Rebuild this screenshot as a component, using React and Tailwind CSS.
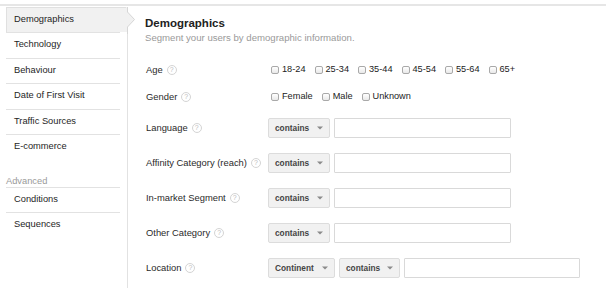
import React from "react";

function Help() {
  return (
    <span className="ml-[4px] inline-flex h-[10px] w-[10px] items-center justify-center rounded-full border border-[#d4d4d4] text-[7px] leading-none text-[#bdbdbd]">
      ?
    </span>
  );
}

function Check({ label }) {
  return (
    <div className="flex items-center">
      <span className="h-[8px] w-[8px] rounded-[2px] border border-[#a9a9a9] bg-gradient-to-b from-white to-[#e9e9e9]" />
      <span className="ml-[3px] text-[9.2px] text-[#222]">{label}</span>
    </div>
  );
}

function Select({ label, w }) {
  return (
    <div
      className={`flex h-[20px] items-center justify-between rounded-[2px] border border-[#dcdcdc] bg-[#f1f1f1] pl-[6px] pr-[6px] ${w}`}
    >
      <span className="text-[8.3px] font-bold text-[#444]">{label}</span>
      <svg width="6" height="4" viewBox="0 0 6 4">
        <path d="M0 0.5 L6 0.5 L3 3.5 Z" fill="#8a8a8a" />
      </svg>
    </div>
  );
}

function Input({ w }) {
  return <div className={`h-[20px] rounded-[1px] border border-[#d9d9d9] bg-white ${w}`} />;
}

function Row({ label, h, children }) {
  return (
    <div className={`flex items-center ${h}`}>
      <div className="flex w-[123px] items-center pl-[1px] text-[9.4px] text-[#2a2a2a]">
        {label}
        <Help />
      </div>
      <div className="flex items-center">{children}</div>
    </div>
  );
}

const Sep = () => <div className="h-px w-[114px] bg-[#e2e2e2]" />;

function Item({ children }) {
  return (
    <div className="flex h-[24.5px] items-center pl-[8px] text-[9.3px] text-[#1e1e1e]">{children}</div>
  );
}

export default function App() {
  return (
    <div
      className="relative h-[288px] w-[606px] overflow-hidden bg-white"
      style={{ fontFamily: '"Liberation Sans", Arial, sans-serif' }}
    >
      <div className="mt-[4px] h-[2px] w-full bg-[#e6e6e6]" />
      <div className="mt-[1px] flex">
        {/* Sidebar */}
        <div className="relative ml-[6px] h-[290px] w-[122px] border-r border-[#e2e2e2]">
          <div className="flex h-[25px] items-center border-l border-t border-[#e0e0e0] bg-[#f1f1f1] pl-[7px] text-[9.3px] text-[#1e1e1e]">
            Demographics
          </div>
          <svg
            className="absolute left-[120px] top-[0px]"
            width="10"
            height="27"
            viewBox="0 0 10 27"
          >
            <path d="M0 0 L1.5 0 L1.5 5 L8.5 12.5 L1.5 20 L1.5 25 L0 25 Z" fill="#f1f1f1" />
            <path d="M1.5 0 L1.5 5 L8.5 12.5 L1.5 20 L1.5 27" fill="none" stroke="#d6d6d6" strokeWidth="1" />
          </svg>
          <Sep />
          <Item>Technology</Item>
          <Sep />
          <Item>Behaviour</Item>
          <Sep />
          <Item>Date of First Visit</Item>
          <Sep />
          <Item>Traffic Sources</Item>
          <Sep />
          <Item>E-commerce</Item>
          <div className="flex h-[27px] items-end pb-[1px] text-[9.3px] leading-[10px] text-[#9a9a9a]">
            Advanced
          </div>
          <Sep />
          <Item>Conditions</Item>
          <Sep />
          <Item>Sequences</Item>
        </div>

        {/* Main */}
        <div className="flex-1 pl-[17px]">
          <div className="pt-[9px] text-[11.5px] font-bold leading-[14px] text-[#222]">Demographics</div>
          <div className="mt-[2px] text-[9.6px] leading-[12px] text-[#9a9a9a]">
            Segment your users by demographic information.
          </div>
          <div className="mt-[12.5px]">
            <Row label="Age" h="h-[27px]">
              <div className="flex items-center gap-[9px] pl-[3px]">
                <Check label="18-24" />
                <Check label="25-34" />
                <Check label="35-44" />
                <Check label="45-54" />
                <Check label="55-64" />
                <Check label="65+" />
              </div>
            </Row>
            <Row label="Gender" h="h-[27px]">
              <div className="flex items-center gap-[9px] pl-[3px]">
                <Check label="Female" />
                <Check label="Male" />
                <Check label="Unknown" />
              </div>
            </Row>
            <Row label="Language" h="h-[35px]">
              <div className="flex items-center gap-[4px]">
                <Select label="contains" w="w-[62px]" />
                <Input w="w-[177px]" />
              </div>
            </Row>
            <Row label="Affinity Category (reach)" h="h-[35px]">
              <div className="flex items-center gap-[4px]">
                <Select label="contains" w="w-[62px]" />
                <Input w="w-[177px]" />
              </div>
            </Row>
            <Row label="In-market Segment" h="h-[35px]">
              <div className="flex items-center gap-[4px]">
                <Select label="contains" w="w-[62px]" />
                <Input w="w-[177px]" />
              </div>
            </Row>
            <Row label="Other Category" h="h-[35px]">
              <div className="flex items-center gap-[4px]">
                <Select label="contains" w="w-[62px]" />
                <Input w="w-[177px]" />
              </div>
            </Row>
            <Row label="Location" h="h-[35px]">
              <div className="flex items-center gap-[4px]">
                <Select label="Continent" w="w-[67px]" />
                <Select label="contains" w="w-[61px]" />
                <Input w="w-[176px]" />
              </div>
            </Row>
          </div>
        </div>
      </div>
    </div>
  );
}
